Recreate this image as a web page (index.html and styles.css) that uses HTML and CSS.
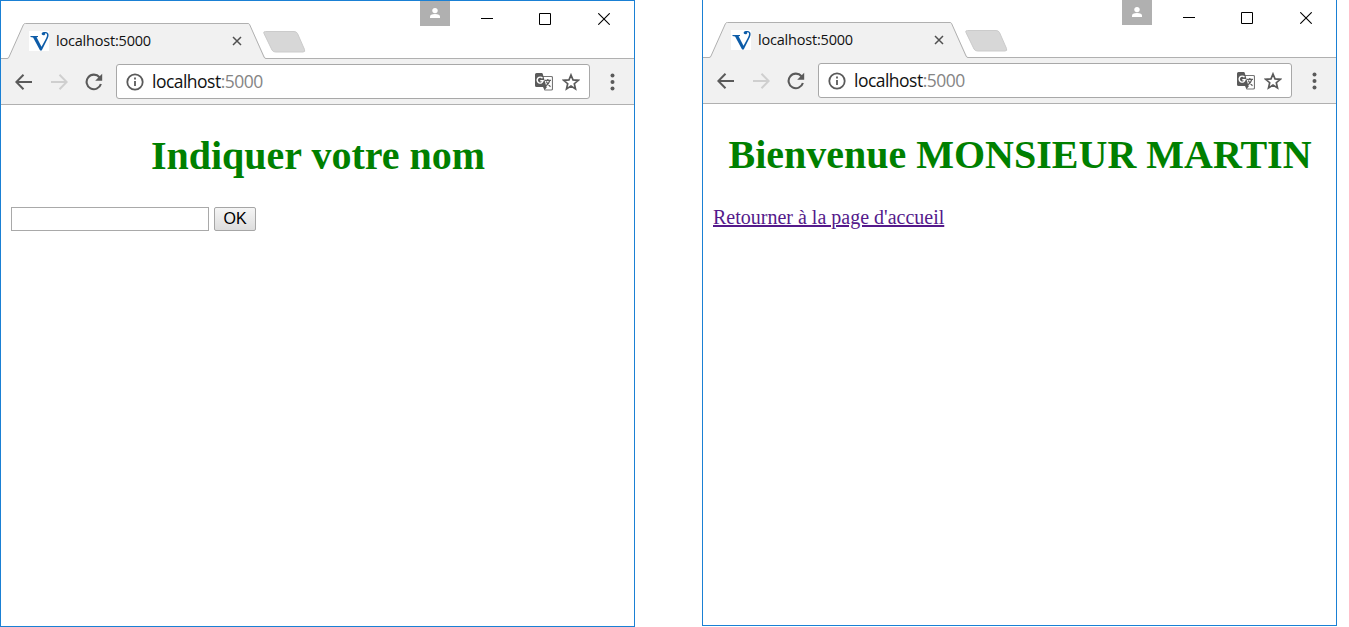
FILE: index.html
```html
<!DOCTYPE html>
<html lang="fr">
<head>
<meta charset="utf-8">
<title>localhost:5000</title>
<link rel="stylesheet" href="styles.css">
</head>
<body>
<svg class="defs" width="0" height="0" aria-hidden="true">
  <symbol id="tab" viewBox="0 0 259 36"><path d="M0 35.500 L0 36 L259 36 L258.500 35 L242.500 1.300 Q242 .5 241 .5 L18.500 .5 Q17 .5 16.500 1.500 L2 34 Q1.500 35.500 0 35.500Z" fill="#f1f1f1"/><path d="M0 35.500 Q1.500 35.500 2 34 L16.500 1.500 Q17 .5 18.500 .5 L241 .5 Q242 .5 242.500 1.300 L257 34 Q257.600 35.500 259 35.500" fill="none" stroke="#b0b0b0"/></symbol>
  <symbol id="favicon" viewBox="0 0 20 20"><path fill="#fff" d="M0 0h20v20H0z"/><path fill="#0d5ca8" d="M1.500 5H9v1L7.600 6.300l4.900 9.400L17 7.500C18.600 4.400 18.400 2.200 16.300 1.900c.3 1.400-.5 2.400-1.900 2.400-1.300 0-2-.9-1.700-1.900C13.100 1.200 14.700.8 16.500.9c3.200.1 3.900 2.900 2.200 6.600L12.700 19.500h-1.600L4.100 6.500 1.500 6z"/></symbol>
  <symbol id="close-tab" viewBox="0 0 10 10"><path d="M1 1l8 8M9 1L1 9" fill="none" stroke="#505050" stroke-width="1.500"/></symbol>
  <symbol id="new-tab" viewBox="0 0 44 24"><path d="M3.500 1.500H32Q34.500 1.500 35.500 3.500L42.500 19.500Q43.500 22 41 22H13.500Q11 22 10 20L2 3.500Q1 1.500 3.500 1.500Z" fill="#d7d7d7" stroke="#cbcbcb"/></symbol>
  <symbol id="user" viewBox="0 0 30 25"><circle cx="15" cy="9.600" r="2.700" fill="#fff"/><path d="M10 17v-1.500q0-2.500 5-2.500t5 2.500V17z" fill="#fff"/></symbol>
  <symbol id="min" viewBox="0 0 12 13"><path fill="#000" d="M0 6h12v1H0z"/></symbol>
  <symbol id="max" viewBox="0 0 12 12"><path d="M.5.5h11v11H.5z" fill="none" stroke="#000"/></symbol>
  <symbol id="close" viewBox="0 0 12 12"><path d="M.3.3l11.400 11.400M11.700.3L.3 11.700" fill="none" stroke="#000" stroke-width="1.100"/></symbol>
  <symbol id="back" viewBox="0 0 18 16"><path d="M17 8H1.500M8.500.8L1.300 8l7.200 7.200" fill="none" stroke="currentColor" stroke-width="2"/></symbol>
  <symbol id="reload" viewBox="0 0 18 18"><path d="M14.500 4.200A7.300 7.300 0 1 0 15.900 11" fill="none" stroke="#5a5a5a" stroke-width="2.100"/><path d="M17.200.7v7h-7z" fill="#5a5a5a"/></symbol>
  <symbol id="info" viewBox="0 0 18 18"><circle cx="9" cy="9" r="7.700" fill="none" stroke="#5a5a5a" stroke-width="1.800"/><path fill="#5a5a5a" d="M8.100 4.600h1.800v1.800H8.100zM8.100 7.900h1.800v5.200H8.100z"/></symbol>
  <symbol id="translate" viewBox="0 0 18 18"><path d="M8 3.500h8.300q1.200 0 1.200 1.200v11.100q0 1.200-1.200 1.200H9.500" fill="#fff" stroke="#757575" stroke-width="1.200"/><path fill="#5a5a5a" d="M1.500 0h5.300q.7 0 .9.700L11.500 14H1.500Q0 14 0 12.500v-11Q0 0 1.500 0zM8 14h4l-2.500 3.300z"/><path d="M7.500 5.200A3 3 0 1 0 8.100 7.700H5.300" fill="none" stroke="#fff" stroke-width="1.400"/><path d="M10 7.300h6M12.800 6v1.300M14.800 7.300q-.7 3.300-4 5.700M11.300 8.500q1 2.500 4.200 5.200" fill="none" stroke="#5f5f5f" stroke-width="1.300"/></symbol>
  <symbol id="star" viewBox="0 0 18 18"><path d="M9 2l2 4.900 5.300.4-4 3.400 1.200 5.200L9 13.100l-4.500 2.800 1.200-5.200-4-3.400L7 6.900z" fill="none" stroke="#5a5a5a" stroke-width="1.700"/></symbol>
  <symbol id="menu" viewBox="0 0 5 18"><g fill="#5a5a5a"><circle cx="2.500" cy="2.500" r="2"/><circle cx="2.500" cy="9" r="2"/><circle cx="2.500" cy="15.500" r="2"/></g></symbol>
</svg>
<main class="desktop">
  <section class="window">
    <header class="titlebar">
      <div class="tab"><svg class="tab-shape"><use href="#tab"/></svg><svg class="favicon"><use href="#favicon"/></svg><span class="tab-title">localhost:5000</span><svg class="tab-close"><use href="#close-tab"/></svg></div>
      <svg class="new-tab"><use href="#new-tab"/></svg>
      <div class="controls"><svg class="user"><use href="#user"/></svg><svg class="minimize"><use href="#min"/></svg><svg class="maximize"><use href="#max"/></svg><svg class="close"><use href="#close"/></svg></div>
    </header>
    <nav class="toolbar">
      <svg class="arrow"><use href="#back"/></svg><svg class="arrow forward"><use href="#back"/></svg><svg class="reload"><use href="#reload"/></svg>
      <div class="address"><svg class="icon"><use href="#info"/></svg><span class="url">localhost<span class="port">:5000</span></span><svg class="icon translate"><use href="#translate"/></svg><svg class="icon"><use href="#star"/></svg></div>
      <svg class="menu"><use href="#menu"/></svg>
    </nav>
    <article class="page">
      <h1 class="heading">Indiquer votre nom</h1>
      <form class="form"><input class="name" type="text" aria-label="Nom"><button class="ok" type="button">OK</button></form>
    </article>
  </section>
  <section class="window second">
    <header class="titlebar">
      <div class="tab"><svg class="tab-shape"><use href="#tab"/></svg><svg class="favicon"><use href="#favicon"/></svg><span class="tab-title">localhost:5000</span><svg class="tab-close"><use href="#close-tab"/></svg></div>
      <svg class="new-tab"><use href="#new-tab"/></svg>
      <div class="controls"><svg class="user"><use href="#user"/></svg><svg class="minimize"><use href="#min"/></svg><svg class="maximize"><use href="#max"/></svg><svg class="close"><use href="#close"/></svg></div>
    </header>
    <nav class="toolbar">
      <svg class="arrow"><use href="#back"/></svg><svg class="arrow forward"><use href="#back"/></svg><svg class="reload"><use href="#reload"/></svg>
      <div class="address"><svg class="icon"><use href="#info"/></svg><span class="url">localhost<span class="port">:5000</span></span><svg class="icon translate"><use href="#translate"/></svg><svg class="icon"><use href="#star"/></svg></div>
      <svg class="menu"><use href="#menu"/></svg>
    </nav>
    <article class="page">
      <h1 class="heading">Bienvenue MONSIEUR MARTIN</h1>
      <a class="home" href="#">Retourner à la page d'accueil</a>
    </article>
  </section>
</main>
</body>
</html>
```
FILE: styles.css
```css
* { box-sizing: border-box; }
body { margin: 0; background: #fff; overflow: hidden; font-family: "Liberation Serif", serif; }
svg { display: block; flex: none; }
.defs { position: absolute; }
.desktop { display: flex; gap: 67px; height: 627px; }
.window { width: 635px; height: 627px; border: 1px solid #1a80d4; flex: none; background: #fff; }
.second { height: 626px; border-top: 0; }
.titlebar { display: flex; height: 58px; padding-left: 6px; border-bottom: 1px solid #b0b0b0; }
.tab { position: relative; display: flex; align-items: center; width: 259px; height: 36px; margin-top: 22px; padding-left: 22px; }
.tab-shape { position: absolute; left: 0; top: 0; width: 259px; height: 36px; }
.favicon { position: relative; width: 20px; height: 20px; }
.tab-title { position: relative; width: 176px; margin-left: 7px; font: 14.5px/20px "Open Sans", sans-serif; letter-spacing: -.2px; color: #111; white-space: nowrap; }
.tab-close { position: relative; width: 10px; height: 10px; }
.new-tab { width: 44px; height: 24px; margin: 29px 0 0 -4px; }
.controls { display: flex; align-items: flex-start; margin-left: auto; padding-right: 24px; }
.user { width: 30px; height: 25px; background: #b0b0b0; }
.minimize { width: 12px; height: 13px; margin: 11px 0 0 31px; }
.maximize { width: 12px; height: 12px; margin: 12px 0 0 46px; }
.close { width: 12px; height: 12px; margin: 12px 0 0 47px; }
.toolbar { display: flex; align-items: center; height: 46px; padding: 0 19px 0 14px; background: #f1f1f1; border-bottom: 1px solid #b0b0b0; }
.arrow { width: 18px; height: 16px; color: #5a5a5a; }
.forward { margin-left: 17px; color: #cfcfcf; transform: scaleX(-1); }
.reload { width: 18px; height: 18px; margin-left: 17px; }
.address { display: flex; align-items: center; width: 474px; height: 35px; margin-left: 13px; margin-right: auto; padding: 0 9px; background: #fff; border: 1px solid #a8a8a8; border-radius: 3px; }
.icon { width: 18px; height: 18px; }
.url { margin-left: 8px; padding-bottom: 2px; font: 17.5px/24px "Open Sans", sans-serif; letter-spacing: -.52px; color: #111; white-space: nowrap; }
.port { color: #858585; }
.translate { margin-left: auto; margin-right: 9px; }
.menu { width: 5px; height: 18px; }
.page { padding: 26px 10px 0; }
.heading { margin: 0; height: 50px; padding-left: 1px; font-size: 40px; line-height: 50px; text-align: center; color: #008000; white-space: nowrap; }
.form { display: flex; gap: 5px; margin-top: 26px; }
.name { width: 198px; height: 24px; padding: 2px; border: 1px solid #a9a9a9; background: #fff; outline: 0; border-radius: 0; }
.ok { width: 42px; height: 24px; padding: 0; border: 1px solid #a6a6a6; border-radius: 2px; background: linear-gradient(#f5f5f5, #dddddd); color: #000; font: 16px/20px "Liberation Sans", sans-serif; }
.home { display: block; width: max-content; margin-top: 24px; font-size: 20px; line-height: 26px; color: #551a8b; white-space: nowrap; text-decoration: underline; text-decoration-thickness: 2px; }
```
